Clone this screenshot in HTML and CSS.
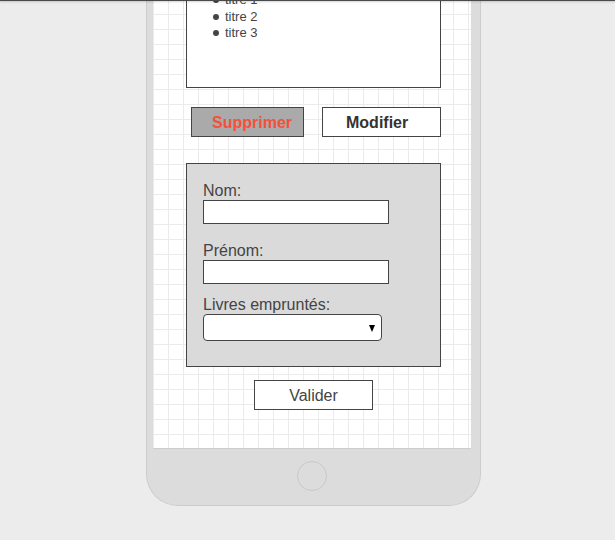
FILE: index.html
```html
<!DOCTYPE html>
<html>
<head>
  <title>Emprunts</title>
  <meta charset="UTF-8" />
  <meta name="viewport" content="width=device-width, initial-scale=1.0"/>
  <link rel="stylesheet" href="styles.css">
</head>
<body>
  <div class="topline"></div>

  <div class="phone">
    <div class="screen">
      <div class="list-box">
        <ul class="titles">
          <li>titre 1</li>
          <li>titre 2</li>
          <li>titre 3</li>
        </ul>
      </div>

      <div class="actions">
        <button class="btn btn-delete">Supprimer</button>
        <button class="btn btn-edit">Modifier</button>
      </div>

      <form class="borrower" onsubmit="return false">
        <label class="field field-nom">Nom:<input type="text"></label>
        <label class="field field-prenom">Prénom:<input type="text"></label>
        <label class="field">Livres empruntés:
          <span class="select-wrap"><select></select></span>
        </label>
      </form>

      <button class="btn-submit">Valider</button>
    </div>
    <div class="home"></div>
  </div>
</body>
</html>
```

FILE: styles.css
```css
body {
  margin: 0;
  background: #ececec;
  font-family: "Liberation Sans", Arial, sans-serif;
  color: #444;
}
.topline {
  position: fixed;
  top: 0;
  left: 0;
  right: 0;
  height: 1px;
  background: #4a4a4a;
  box-shadow: 0 1px 2px rgba(0,0,0,0.25);
}
.phone {
  box-sizing: border-box;
  width: 335px;
  margin: -50px 0 0 146px;
  padding: 0 9px 0 6px;
  background: #dcdcdc;
  border: 1px solid #cdcdcd;
  border-top: none;
  border-radius: 0 0 32px 32px;
}
.screen {
  padding: 20px 30px 38px 33px;
  background-color: #fff;
  background-image:
    linear-gradient(90deg, #ebebeb 1px, transparent 1px),
    linear-gradient(#ebebeb 1px, transparent 1px);
  background-size: 15px 15px;
  background-position: 0 4px;
  border-bottom: 1px solid #cdcdcd;
}
.list-box {
  box-sizing: border-box;
  height: 118px;
  padding-top: 21px;
  background: #fff;
  border: 1px solid #444;
}
.titles {
  list-style: none;
  margin: 0;
  padding: 0 0 0 26px;
  font-size: 13px;
  line-height: 16.5px;
}
.titles li::before {
  content: "";
  display: inline-block;
  width: 6px;
  height: 6px;
  margin: 0 6px 1px 0;
  border-radius: 50%;
  background: #444;
}
.actions {
  display: flex;
  gap: 18px;
  margin: 19px 0 0 5px;
}
.btn {
  box-sizing: border-box;
  height: 30px;
  margin: 0;
  padding-top: 2px;
  border: 1px solid #444;
  font-family: inherit;
  font-size: 16px;
  font-weight: bold;
  text-align: left;
}
.btn-delete {
  width: 113px;
  padding-left: 20px;
  background: #aaa;
  color: #f5503a;
}
.btn-edit {
  width: 119px;
  padding-left: 23px;
  background: #fff;
  color: #333;
}
.borrower {
  margin: 26px 0 0;
  padding: 18px 0 25px 16px;
  background: #dadada;
  border: 1px solid #444;
}
.field {
  display: block;
  font-size: 16px;
  line-height: 18px;
}
.field-nom {
  margin-bottom: 18px;
}
.field-prenom {
  margin-bottom: 12px;
}
.field input {
  display: block;
  box-sizing: border-box;
  width: 186px;
  height: 24px;
  margin: 0;
  padding: 0 4px;
  background: #fff;
  border: 1px solid #444;
  border-radius: 0;
}
.select-wrap {
  position: relative;
  display: block;
  width: 179px;
}
.select-wrap select {
  display: block;
  box-sizing: border-box;
  width: 179px;
  height: 27px;
  margin: 0;
  background: #fff;
  border: 1px solid #444;
  border-radius: 4px;
  -webkit-appearance: none;
  appearance: none;
}
.select-wrap::after {
  content: "";
  position: absolute;
  top: 11px;
  right: 7px;
  border-left: 3.5px solid transparent;
  border-right: 3.5px solid transparent;
  border-top: 7px solid #000;
}
.btn-submit {
  display: block;
  box-sizing: border-box;
  width: 119px;
  height: 30px;
  margin: 13px auto 0;
  padding-top: 2px;
  background: #fff;
  border: 1px solid #444;
  font-family: inherit;
  font-size: 16px;
  color: #444;
}
.home {
  width: 30px;
  height: 30px;
  margin: 12px auto 14px;
  box-sizing: border-box;
  border: 1px solid #c8c8c8;
  border-radius: 50%;
}
```
